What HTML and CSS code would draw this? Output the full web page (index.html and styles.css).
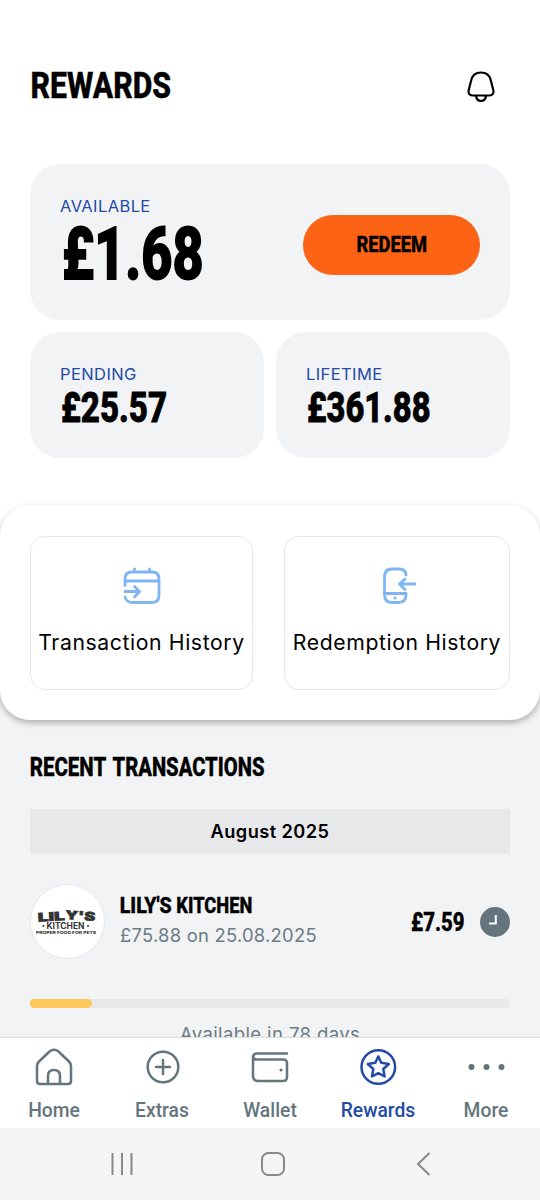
FILE: index.html
```html
<!DOCTYPE html>
<html lang="en">
<head>
<meta charset="utf-8">
<title>Rewards</title>
<link rel="stylesheet" href="styles.css">
</head>
<body>
<div class="screen">
  <main class="content">
    <header class="header">
      <svg class="display" width="150" height="40"><text x="-.5" y="32" font-size="37.200" textLength="140.500" lengthAdjust="spacingAndGlyphs">REWARDS</text></svg>
      <svg class="bell" width="30" height="34" viewBox="0 0 30 34"><path d="M15 2.500C9.500 2.500 6 6 5 11L2.600 20.500C2 24 4 25.500 7 25.500H23C26 25.500 28 24 27.400 20.500L25 11C24 6 20.500 2.500 15 2.500ZM10 26C10.500 29 12.500 31 15 31S19.500 29 20 26"/></svg>
    </header>
    <section class="balances">
      <div class="card card-wide">
        <div class="balance">
          <div class="label available">AVAILABLE</div>
          <svg class="display display-large" width="150" height="66"><text x="1" y="60.500" font-size="73" textLength="141.500" lengthAdjust="spacingAndGlyphs">£1.68</text></svg>
        </div>
        <button class="redeem"><svg class="display" width="72" height="24"><text x=".5" y="19" font-size="22" textLength="70.500" lengthAdjust="spacingAndGlyphs">REDEEM</text></svg></button>
      </div>
      <div class="card">
        <div class="label">PENDING</div>
        <svg class="display display-medium" width="120" height="40"><text x="0" y="36" font-size="42.500" textLength="106" lengthAdjust="spacingAndGlyphs">£25.57</text></svg>
      </div>
      <div class="card">
        <div class="label">LIFETIME</div>
        <svg class="display display-medium" width="140" height="40"><text x="0" y="36" font-size="42.500" textLength="123.500" lengthAdjust="spacingAndGlyphs">£361.88</text></svg>
      </div>
    </section>
    <div class="panel-wrap">
      <section class="panel">
        <a class="tile">
          <svg class="tile-icon" width="40" height="40" viewBox="0 0 40 40"><path d="M3 19.500V13Q3 6 10 6H30Q37 6 37 13V29Q37 36.500 30 36.500H10Q4.500 36.500 3 31M3 15H37M12.500 3V6M27.500 3V6M3 25.500H17M12.500 20.500L17.500 25.500L12.500 31"/></svg>
          <span class="tile-text transaction">Transaction History</span>
        </a>
        <a class="tile">
          <svg class="tile-icon" width="40" height="40" viewBox="0 0 40 40"><path d="M29 9Q28.500 3 22 3H15Q7.500 3 7.500 11V28.500Q7.500 36.500 15 36.500H21Q29 36.500 29 29V27.500H7.500M38 18H23M28 13L22.500 18L28 23.500"/><circle cx="18" cy="32" r="1.500"/></svg>
          <span class="tile-text redemption">Redemption History</span>
        </a>
      </section>
    </div>
    <section class="recent">
      <svg class="display" width="240" height="28"><text y="24.300" font-size="25.600"><tspan x="-.3" textLength="76" lengthAdjust="spacingAndGlyphs">RECENT</tspan> <tspan x="82.500" textLength="152" lengthAdjust="spacingAndGlyphs">TRANSACTIONS</tspan></text></svg>
      <div class="month">August 2025</div>
      <div class="entry">
        <svg class="logo" width="75" height="75" viewBox="0 0 75 75">
          <circle cx="37.500" cy="37.500" r="37"/>
          <text x="8" y="37" font-size="12" transform="rotate(-3 20 37)" textLength="27" lengthAdjust="spacingAndGlyphs" class="brand">LIL</text>
          <text x="35" y="36" font-size="12" transform="rotate(4 50 36)" textLength="30" lengthAdjust="spacingAndGlyphs" class="brand">Y'S</text>
          <text x="16.500" y="44.700" font-size="8.500" textLength="38" lengthAdjust="spacingAndGlyphs">KITCHEN</text>
          <circle class="dot" cx="13.500" cy="42" r="1"/><circle class="dot" cx="58" cy="42" r="1"/>
          <text x="6" y="49.500" font-size="4" textLength="60" lengthAdjust="spacingAndGlyphs" class="brand-small">PROPER FOOD FOR PETS</text>
        </svg>
        <div class="entry-body">
          <svg class="display" width="140" height="24"><text y="19" font-size="22.500"><tspan x="-.3" textLength="52" lengthAdjust="spacingAndGlyphs">LILY'S</tspan> <tspan x="56.300" textLength="76" lengthAdjust="spacingAndGlyphs">KITCHEN</tspan></text></svg>
          <div class="entry-detail">£75.88 on 25.08.2025</div>
        </div>
        <svg class="display amount" width="54" height="28"><text x="0" y="23" font-size="25.600" textLength="53.500" lengthAdjust="spacingAndGlyphs">£7.59</text></svg>
        <svg width="30" height="30" viewBox="0 0 30 30"><circle cx="15" cy="15" r="15" fill="#65757d"/><path d="M15.800 8V16.500H9" fill="none" stroke="#fff" stroke-width="2"/></svg>
      </div>
      <div class="track"><div class="fill" style="width:13%"></div></div>
      <div class="due">Available in 78 days</div>
    </section>
  </main>
  <nav class="tabs">
    <a class="tab"><svg class="tab-icon" width="38" height="38" viewBox="0 0 38 38"><path d="M2 18Q2 15.500 4 13.500L14.500 3.500Q19 0 23.500 3.500L34 13.500Q36 15.500 36 18V33Q36 36 33 36H5Q2 36 2 33ZM13 36V28Q13 22 19 22T25 28V36"/></svg>Home</a>
    <a class="tab"><svg class="tab-icon" width="38" height="38" viewBox="0 0 38 38"><circle cx="20" cy="19" r="15.300"/><path d="M13 19H27M20 12V26"/></svg>Extras</a>
    <a class="tab"><svg class="tab-icon" width="38" height="38" viewBox="0 0 38 38"><path d="M36 5.500H6Q2 5.500 2 10V28Q2 33 7 33H32Q36 33 36 29V15Q36 11.500 32 11.500H6Q2 11.500 2 8"/><circle cx="30" cy="22" r=".8" stroke-width="1.500"/></svg>Wallet</a>
    <a class="tab active"><svg class="tab-icon" width="38" height="38" viewBox="0 0 38 38"><circle cx="19.300" cy="19" r="16.800"/><path d="M19.300 8.500L22.300 14.800L29.800 16L24.300 21L25.600 28.500L19.300 25.200L13 28.500L14.300 21L8.800 16L16.300 14.800Z"/></svg>Rewards</a>
    <a class="tab"><svg class="tab-icon dots" width="38" height="38" viewBox="0 0 38 38"><circle cx="4.500" cy="19" r="3"/><circle cx="19.500" cy="19" r="3"/><circle cx="34.500" cy="19" r="3"/></svg>More</a>
  </nav>
  <div class="system">
    <svg width="24" height="24" viewBox="0 0 24 24"><path d="M2.500 1V23M12 1V23M21.500 1V23"/></svg>
    <svg width="24" height="24" viewBox="0 0 24 24"><rect x="1" y="1" width="22" height="22" rx="6.500"/></svg>
    <svg width="24" height="24" viewBox="0 0 24 24"><path d="M17.500 1L6 12L17.500 23"/></svg>
  </div>
</div>
</body>
</html>
```
FILE: styles.css
```css
* { box-sizing: border-box; }
body { margin: 0; background: #fff; color: #000; font-family: Inter, sans-serif; }
svg { display: block; flex: none; }
.screen { width: 540px; height: 1200px; display: flex; flex-direction: column; overflow: hidden; }
.content { height: 1037px; overflow: hidden; background: #f2f3f5; }
.display { font-family: Roboto, sans-serif; font-weight: 800; fill: #000; stroke: #000; stroke-width: .4px; overflow: visible; }
.display-medium { stroke-width: .9px; }
.display-large { stroke-width: 2px; }
.header { height: 164px; padding: 66px 44px 0 31px; background: #fff; display: flex; justify-content: space-between; }
.bell { margin-top: 4px; fill: none; stroke: #000; stroke-width: 2.200; stroke-linejoin: round; }
.balances { height: 341px; padding: 0 30px; background: #fff; display: grid; grid-template-columns: 234px 234px; grid-template-rows: 156px 126px; gap: 12px; }
.card { background: #f2f3f5; border-radius: 30px; padding: 32px 31px; }
.card-wide { grid-column: 1 / 3; display: flex; justify-content: space-between; padding: 32px 30px 0 31px; }
.label { height: 22px; line-height: 20px; margin-left: -1px; font-size: 16.500px; color: #234ba6; letter-spacing: .4px; }
.redeem { width: 177px; height: 60px; margin-top: 19px; padding: 0; border: 0; border-radius: 30px; background: #fd6314; display: flex; align-items: center; justify-content: center; }
.panel-wrap { background: linear-gradient(#fff 50%, #f2f3f5 50%); }
.panel { height: 215px; padding: 31px 30px 30px; background: #fff; border-radius: 30px; box-shadow: 0 3px 6px rgba(0,0,0,.28); display: flex; justify-content: space-between; }
.tile { height: 154px; width: 223px; border: 1px solid #e6e7e8; border-radius: 15px; padding-top: 29px; display: flex; flex-direction: column; align-items: center; }
.tile:last-child { width: 226px; }
.tile-icon { fill: none; stroke: #7fb5f5; stroke-width: 2.800; stroke-linecap: round; stroke-linejoin: round; }
.tile-icon circle { fill: #7fb5f5; stroke: none; }
.tile-text { margin-top: 22px; font-size: 21.200px; line-height: 28px; white-space: nowrap; letter-spacing: .6px; }
.recent { padding: 32px 30px 0; }
.month { height: 45px; margin-top: 29px; background: #e7e8ea; text-align: center; font-size: 18.200px; font-weight: 600; line-height: 45px; letter-spacing: .45px; }
.entry { height: 75px; margin-top: 30px; display: flex; align-items: center; }
.logo { font-family: Inter, sans-serif; font-weight: 700; fill: #333; }
.logo > circle:first-child { fill: #fff; stroke: #e6e7e9; }
.logo .dot { fill: #333; }
.brand { font-weight: 900; stroke: #333; stroke-width: .6px; }
.brand-small { font-weight: 800; }
.entry-body { margin-left: 15px; flex: 1; padding-bottom: 1px; }
.entry-detail { height: 31px; line-height: 35px; font-size: 18.400px; color: #6c7b84; white-space: nowrap; letter-spacing: .25px; }
.amount { margin-right: 15px; }
.track { height: 9px; margin-top: 40px; border-radius: 5px; background: #e7e8ea; }
.fill { height: 9px; border-radius: 5px; background: #fcc85b; }
.due { margin-top: 13px; line-height: 26px; text-align: center; font-size: 18.600px; color: #6c7b84; letter-spacing: .35px; }
.tabs { height: 91px; background: #fff; border-top: 1px solid #dcddde; display: flex; }
.tab { flex: 1; padding-top: 10px; display: flex; flex-direction: column; align-items: center; font: 500 19.300px/24px Roboto, sans-serif; color: #65757d; gap: 13px; }
.tab-icon { fill: none; stroke: currentColor; stroke-width: 2.500; stroke-linejoin: round; stroke-linecap: round; }
.dots { fill: currentColor; stroke: none; }
.active { color: #234ba6; }
.system { height: 72px; padding: 0 104px 0 110px; background: #f5f5f5; display: flex; align-items: center; justify-content: space-between; }
.system svg { fill: none; stroke: #888; stroke-width: 2; }
```
